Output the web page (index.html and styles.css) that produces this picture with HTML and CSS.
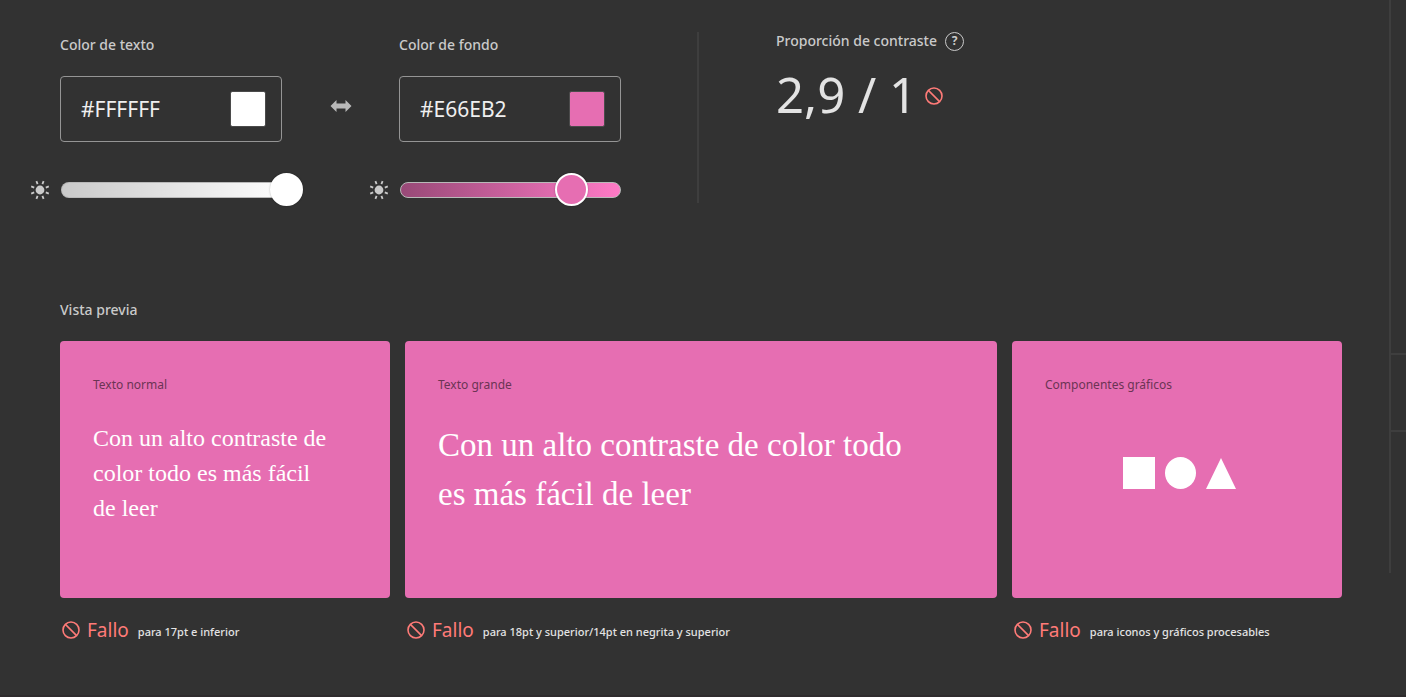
FILE: index.html
```html
<!DOCTYPE html>
<html lang="es">
<head>
<meta charset="utf-8">
<meta name="viewport" content="width=device-width, initial-scale=1">
<title>Comprobador de contraste</title>
<link rel="stylesheet" href="styles.css">
</head>
<body>
<svg class="sprite" aria-hidden="true">
  <symbol id="sun" viewBox="0 0 20 20">
    <circle cx="10" cy="10" r="4.4" fill="currentColor"/>
    <g stroke="currentColor" stroke-width="1.8">
      <path d="M12.4 4.2 13.6 1.2M7.6 4.2 6.4 1.2M12.4 15.8 13.6 18.8M7.6 15.8 6.4 18.8M15.8 7.6 18.8 6.4M15.8 12.4 18.8 13.6M4.2 7.6 1.2 6.4M4.2 12.4 1.2 13.6"/>
    </g>
  </symbol>
  <symbol id="fail" viewBox="0 0 18 18">
    <g fill="none" stroke="currentColor" stroke-width="1.6">
      <circle cx="9" cy="9" r="8"/>
      <path d="M3.4 3.4 14.6 14.6"/>
    </g>
  </symbol>
</svg>
<div class="page">
  <main class="content">
    <section class="controls">
      <div class="picker">
        <label class="title" for="text-hex">Color de texto</label>
        <div class="field">
          <input class="hex" id="text-hex" type="text" value="#FFFFFF">
          <input class="swatch" type="color" value="#ffffff" aria-label="Elegir color de texto">
        </div>
        <svg class="sun"><use href="#sun"/></svg>
        <input class="slider slider-text" type="range" min="0" max="100" value="100" aria-label="Luminosidad del texto">
      </div>
      <button class="swap" type="button" aria-label="Intercambiar colores">
        <svg width="22" height="14" viewBox="0 0 22 14"><path fill="currentColor" d="M0.5 7 6.5 1V4.6H15.5V1L21.5 7 15.5 13V9.4H6.5V13Z"/></svg>
      </button>
      <div class="picker">
        <label class="title" for="back-hex">Color de fondo</label>
        <div class="field">
          <input class="hex" id="back-hex" type="text" value="#E66EB2">
          <input class="swatch" type="color" value="#e66eb2" aria-label="Elegir color de fondo">
        </div>
        <svg class="sun"><use href="#sun"/></svg>
        <input class="slider slider-back" type="range" min="0" max="100" value="83" aria-label="Luminosidad del fondo">
      </div>
      <div class="ratio">
        <div class="ratio-head">
          <h2 class="title">Proporción de contraste</h2>
          <button class="help" type="button" aria-label="Ayuda">?</button>
        </div>
        <div class="ratio-value">
          <span>2,9 / 1</span>
          <svg class="fail-icon"><use href="#fail"/></svg>
        </div>
      </div>
    </section>

    <section class="preview">
      <h2 class="title">Vista previa</h2>
      <div class="cards">
        <article>
          <div class="card">
            <h3 class="card-title">Texto normal</h3>
            <p class="sample sample-normal">Con un alto contraste de color todo es más fácil de leer</p>
          </div>
          <p class="result"><svg class="fail-icon"><use href="#fail"/></svg><strong class="status">Fallo</strong><span class="scope">para 17pt e inferior</span></p>
        </article>
        <article>
          <div class="card">
            <h3 class="card-title">Texto grande</h3>
            <p class="sample sample-large">Con un alto contraste de color todo es más fácil de leer</p>
          </div>
          <p class="result"><svg class="fail-icon"><use href="#fail"/></svg><strong class="status">Fallo</strong><span class="scope">para 18pt y superior/14pt en negrita y superior</span></p>
        </article>
        <article>
          <div class="card">
            <h3 class="card-title">Componentes gráficos</h3>
            <svg class="shapes" viewBox="-6 0 120 32" width="120" height="32">
              <path fill="#fff" d="M0 0H32V32H0ZM98 1 113 32H83Z"/>
              <ellipse cx="57.500" cy="16" rx="15.500" ry="16" fill="#fff"/>
            </svg>
          </div>
          <p class="result"><svg class="fail-icon"><use href="#fail"/></svg><strong class="status">Fallo</strong><span class="scope">para iconos y gráficos procesables</span></p>
        </article>
      </div>
    </section>
  </main>
  <aside class="rail"><div class="rail-top"></div><div class="rail-item"></div></aside>
</div>
</body>
</html>
```
FILE: styles.css
```css
* { box-sizing: border-box; }

body {
  margin: 0;
  background: #323232;
  color: #e3e3e3;
  font-family: "Noto Sans", "Open Sans", sans-serif;
}

h2, h3, p { margin: 0; }

.sprite { position: absolute; width: 0; height: 0; }

.page {
  display: flex;
  align-items: flex-start;
  min-height: 100vh;
  border-bottom: 2px solid #2e2b2d;
}

.content {
  flex: 1;
  min-width: 0;
  padding: 32px 47px 0 30px;
}

.title {
  font-size: 14px;
  font-weight: 500;
  line-height: 24px;
  color: #cacaca;
}

/* Color pickers */
.controls { display: flex; align-items: flex-start; }

.picker {
  display: grid;
  grid-template-columns: 30px 222px;
}

.picker .title, .field { grid-column: 2; }
.picker .title { line-height: 26px; }

.field {
  display: flex;
  align-items: center;
  height: 66px;
  margin-top: 18px;
  padding: 0 15px 0 20px;
  border: 1px solid #959595;
  border-radius: 4px;
}

.hex {
  flex: 1;
  min-width: 0;
  padding: 0;
  border: 0;
  background: none;
  color: #efefef;
  font: 21px/30px "Noto Sans", "Open Sans", sans-serif;
}

.swatch {
  width: 36px;
  height: 36px;
  padding: 0;
  border: 1px solid #4b4b4b;
  border-radius: 2px;
  background: none;
  appearance: none;
}

.swatch::-webkit-color-swatch-wrapper { padding: 0; }
.swatch::-webkit-color-swatch { border: 0; border-radius: 1px; }

.sun {
  width: 20px;
  height: 20px;
  margin-top: 38px;
  color: #cacaca;
}

.slider {
  width: 221px;
  height: 33px;
  margin: 31px 0 0 1px;
  appearance: none;
  background: none;
}

.slider::-webkit-slider-runnable-track {
  height: 16px;
  border: 1px solid #b9b9b9;
  border-radius: 8px;
}

.slider::-webkit-slider-thumb {
  width: 33px;
  height: 33px;
  margin-top: -10px;
  border: 2px solid #fff;
  border-radius: 50%;
  appearance: none;
  box-shadow: 0 0 2px rgba(0, 0, 0, 0.3);
}

.slider-text { width: 243px; }
.slider-text::-webkit-slider-runnable-track {
  border-right-color: transparent;
  background: linear-gradient(90deg, #cacaca, #fff) left / 230px 100% no-repeat;
}
.slider-text::-webkit-slider-thumb { background: #fff; }
.slider-back::-webkit-slider-runnable-track { background: linear-gradient(90deg, #984977, #ff7ac6); }
.slider-back::-webkit-slider-thumb { background: #e66eb2; }

.swap {
  display: flex;
  justify-content: center;
  width: 87px;
  margin: 67px 0 0;
  padding: 0 0 0 30px;
  border: 0;
  background: none;
  color: #b9b9b9;
}

/* Contrast ratio */
.ratio {
  min-height: 171px;
  margin-left: 76px;
  padding-left: 77px;
  border-left: 2px solid #3e3e3e;
}

.ratio-head { display: flex; align-items: center; gap: 8px; height: 18px; }

.help {
  width: 19px;
  height: 19px;
  padding: 0;
  border: 1px solid #cacaca;
  border-radius: 50%;
  background: none;
  color: #cacaca;
  font: bold 12px/16px "Noto Sans", sans-serif;
}

.ratio-value {
  display: flex;
  align-items: center;
  gap: 8px;
  margin-top: 9px;
  font-size: 49px;
  line-height: 70px;
}

.fail-icon { width: 18px; height: 18px; color: #ff7b78; flex: none; }
.ratio-value .fail-icon { margin-top: 4px; }

/* Preview */
.preview { margin-top: 92px; padding-left: 30px; }

.cards {
  display: grid;
  grid-template-columns: 330fr 592fr 330fr;
  gap: 15px;
  margin-top: 19px;
}

.card {
  min-height: 257px;
  padding: 33px;
  border-radius: 4px;
  background: #e66eb2;
  color: #fff;
}

.card-title {
  font-size: 12px;
  font-weight: 400;
  line-height: 22px;
  color: #6b3454;
}

.sample {
  max-width: 90%;
  margin-top: 25px;
  font-family: "Liberation Serif", "Times New Roman", serif;
}
.sample-normal { font-size: 24px; line-height: 35px; }
.sample-large { font-size: 33px; line-height: 49px; }

.shapes { display: block; margin: 61px auto 0; }

.result {
  display: flex;
  align-items: center;
  height: 30px;
  margin-top: 17px;
  padding-left: 2px;
}

.status {
  margin: 0 9px 0 7px;
  font-size: 19px;
  font-weight: 400;
  color: #ff7b78;
}

.scope {
  padding-top: 3px;
  font-size: 11px;
  font-weight: 500;
}

/* Right rail */
.rail { width: 17px; height: 573px; border-left: 2px solid #3e3e3e; }
.rail-top { height: 355px; border-bottom: 2px solid #3e3e3e; }
.rail-item { height: 77px; border-bottom: 2px solid #3e3e3e; }
```
